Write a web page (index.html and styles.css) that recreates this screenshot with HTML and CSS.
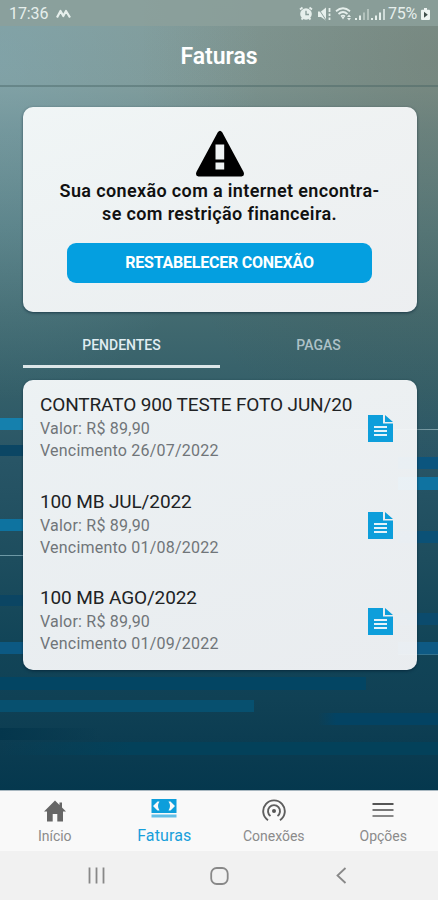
FILE: index.html
```html
<!DOCTYPE html>
<html lang="pt-BR">
<head>
<meta charset="utf-8">
<title>Faturas</title>
<link rel="stylesheet" href="styles.css">
</head>
<body>
<div class="app">
  <div class="status">
    <span class="clock">17:36</span>
    <svg class="st-m" width="15" height="10" viewBox="0 0 15 10"><path d="M1 8.5 L4.5 2 L7.3 7 L10 2 L14 8.5" fill="none" stroke="#e6efec" stroke-width="2.2" stroke-linejoin="round"/></svg>
    <svg class="st-icons" width="87" height="16" viewBox="0 0 87 16" fill="#e6efec">
      <path d="M1 3.5 L3.5 1.5 M13 3.5 L10.5 1.5 M2.5 13.5 L4 12 M11.5 13.5 L10 12" stroke="#e6efec" stroke-width="1.8"/>
      <circle cx="7" cy="8" r="5.8"/><path d="M7 4.7 V8.5 H10" fill="none" stroke="#8a9f9b" stroke-width="1.4"/>
      <path d="M19 5.5 H22 L27 1.5 V14.5 L22 11 H19Z"/><path d="M19 2 L27 14" stroke="#8a9f9b" stroke-width="1"/><path d="M30.5 2 V6 M30.5 7.5 V10 M30.5 11.5 V14" stroke="#e6efec" stroke-width="1.8"/>
      <g fill="none" stroke="#e6efec" stroke-width="1.8"><path d="M37 5.3 Q44 -.7 51 5.3"/><path d="M39.500 8 Q44 4 48.500 8"/><path d="M42 10.5 Q44 8.8 46 10.5"/></g>
      <path d="M42.500 11 L44 13.5 L45.500 11Z M48 11 L50 8.5 L52 11Z M48 12 L50 14.5 L52 12Z"/>
      <path d="M56 12h2v2h-2z M60 9.5h2v4.500h-2z"/><path opacity=".45" d="M64 6.5h2v7.500h-2z M68 3h2v11h-2z"/>
      <path d="M72 12h2v2h-2z M76 9.500h2v4.500h-2z M80 6.500h2v7.500h-2z"/><path opacity=".75" d="M84 3h2v11h-2z"/>
    </svg>
    <span class="percent">75%</span>
    <svg class="st-bat" width="9" height="14" viewBox="0 0 9 14"><path d="M3 1h3v1.800h2q1 0 1 1V12q0 1-1 1H1q-1 0-1-1V3.800q0-1 1-1h2Z" fill="#edf4f2"/><path d="M3 4.700 L6.800 7.700 L3 10.700Z" fill="#41504d"/></svg>
  </div>
  <header class="header"><h1>Faturas</h1></header>
  <main class="content">
    <section class="card alert">
      <svg width="50" height="47" viewBox="0 0 50 47"><path fill-rule="evenodd" d="M22.800 2.200 Q25 -.8 27.200 2.200 L48.600 42 Q50 46.300 46.500 46.500 H3.500 Q0 46.300 1.400 42Z M20.500 14.500V29.500H29.200V14.500Z M20.500 32.500V39.500H29.200V32.500Z"/></svg>
      <p>Sua conexão com a internet encontra-<br>se com restrição financeira.</p>
      <button class="btn">RESTABELECER CONEXÃO</button>
    </section>
    <nav class="tabs">
      <div class="tab active"><span>PENDENTES</span></div>
      <div class="tab"><span>PAGAS</span></div>
    </nav>
    <section class="card list">
      <article class="item">
        <div><h2>CONTRATO 900 TESTE FOTO JUN/20</h2><p>Valor: R$ 89,90</p><p>Vencimento 26/07/2022</p></div>
        <svg class="doc" width="25" height="27" viewBox="0 0 25 27"><path fill="#0d9edb" d="M0 0H15V8.500H25V27H0Z M17 0L25 7H17Z"/><path d="M6 12H19M6 16H19M6 20H19" stroke="#e5f3fa" stroke-width="2"/></svg>
      </article>
      <article class="item">
        <div><h2>100 MB JUL/2022</h2><p>Valor: R$ 89,90</p><p>Vencimento 01/08/2022</p></div>
        <svg class="doc" width="25" height="27" viewBox="0 0 25 27"><path fill="#0d9edb" d="M0 0H15V8.500H25V27H0Z M17 0L25 7H17Z"/><path d="M6 12H19M6 16H19M6 20H19" stroke="#e5f3fa" stroke-width="2"/></svg>
      </article>
      <article class="item">
        <div><h2>100 MB AGO/2022</h2><p>Valor: R$ 89,90</p><p>Vencimento 01/09/2022</p></div>
        <svg class="doc" width="25" height="27" viewBox="0 0 25 27"><path fill="#0d9edb" d="M0 0H15V8.500H25V27H0Z M17 0L25 7H17Z"/><path d="M6 12H19M6 16H19M6 20H19" stroke="#e5f3fa" stroke-width="2"/></svg>
      </article>
    </section>
  </main>
  <nav class="bottom">
    <div class="nav-item"><svg width="24" height="24" viewBox="0 0 24 24"><path fill="#666" d="M12 1.500L1 12.500H4V22.500H9.700V15H14.300V22.500H20V12.500H23L19 8.500V3.500H16.500V6Z"/></svg><span>Início</span></div>
    <div class="nav-item on"><svg width="26" height="24" viewBox="0 0 26 24"><path fill="#0d9edb" fill-rule="evenodd" d="M.5 0H25.500V14H.5Z M2 7L6.500 2.500H8.500Q5.500 7 8.500 11.500H6.500Z M24 7L19.500 2.500H17.500Q20.500 7 17.500 11.500H19.500Z"/><path fill="#63bfe7" d="M.5 15.500H25.500V18.500H.5Z"/></svg><span>Faturas</span></div>
    <div class="nav-item"><svg width="24" height="24" viewBox="0 0 24 24" fill="none" stroke="#5e5e5e" stroke-width="1.900"><circle cx="12" cy="12" r="2" fill="#555" stroke="none"/><path d="M8.500 17A6 6 0 1 1 15.500 17"/><path d="M6 21.200A10.800 10.800 0 1 1 18 21.200"/></svg><span>Conexões</span></div>
    <div class="nav-item"><svg width="24" height="24" viewBox="0 0 24 24" fill="none" stroke-width="2"><path stroke="#555" d="M1.500 5H22.500"/><path stroke="#777" d="M1.500 11H22.500"/><path stroke="#888" d="M1.500 17H22.500"/></svg><span>Opções</span></div>
  </nav>
  <div class="system">
    <svg width="18" height="17" viewBox="0 0 18 17"><path d="M1.500 .5V16.500M8.500 .5V16.500M15.500 .5V16.500" stroke="#888" stroke-width="1.800"/></svg>
    <svg width="19" height="18" viewBox="0 0 19 18"><rect x="1.200" y="1" width="16.500" height="16" rx="5.500" fill="none" stroke="#888" stroke-width="1.800"/></svg>
    <svg width="11" height="17" viewBox="0 0 11 17"><path d="M9.500 1L1.500 8.500L9.500 16" fill="none" stroke="#888" stroke-width="1.800"/></svg>
  </div>
</div>
</body>
</html>
```

FILE: styles.css
```css
* { box-sizing: border-box; }
body, h1, h2, p { margin: 0; }
body { font-family: Roboto, sans-serif; background: #f1f1f1; }
svg { display: block; flex: none; }

.app {
  width: 438px;
  height: 900px;
  display: flex;
  flex-direction: column;
  overflow: hidden;
  background-color: #083a50;
  background-repeat: no-repeat;
  background-image:
    linear-gradient(#1580ad, #1580ad), linear-gradient(#0b4664, #0b4664),
    linear-gradient(#0e73a0, #0e73a0), linear-gradient(#6d98a5, #6d98a5),
    linear-gradient(#0b4563, #0b4563), linear-gradient(#0c5983, #0c5983),
    linear-gradient(90deg, rgba(127,160,168,0), #7fa0a8), linear-gradient(#0b557e, #0b557e),
    linear-gradient(#0f73a1, #0f73a1), linear-gradient(#0b5176, #0b5176),
    linear-gradient(#0b4b6d, #0b4b6d), linear-gradient(#0e5a84, #0e5a84),
    linear-gradient(#32718d, #32718d),
    linear-gradient(#034563, #034563), linear-gradient(#07506f, #07506f),
    linear-gradient(90deg, rgba(3,67,99,0), #034363 15%),
    linear-gradient(90deg, #04364c, rgba(4,54,76,0)),
    linear-gradient(90deg, rgba(3,65,90,0), #03415a 30%),
    radial-gradient(ellipse 260px 340px at 0 60px, rgba(130,180,200,.34), rgba(130,180,200,0)),
    radial-gradient(ellipse 300px 420px at 438px 60px, rgba(85,75,50,.22), rgba(85,75,50,0)),
    linear-gradient(#839b98 0, #7f9895 85px, #6f8d8d 130px, #557b7f 230px, #426a70 315px, #345f69 390px, #285566 460px, #1d4d5e 560px, #124558 640px, #104155 700px, #0b3c51 745px, #05384e 790px);
  background-size:
    24px 12px, 24px 11px, 24px 12px, 24px 1px, 24px 11px, 24px 12px,
    110px 1px, 40px 12px, 40px 13px, 40px 12px, 40px 12px, 40px 12px, 40px 1px,
    366px 13px, 254px 12px, 120px 12px, 100px 12px, 438px 13px,
    438px 790px, 438px 790px, 438px 790px;
  background-position:
    0 418px, 0 445px, 0 519px, 0 555px, 0 595px, 0 642px,
    328px 429px, 398px 457px, 398px 477px, 398px 531px, 398px 613px, 398px 642px, 398px 654px,
    0 677px, 0 700px, 318px 713px, 0 728px, 0 742px,
    0 0, 0 0, 0 0;
}

.status {
  height: 26px;
  padding: 2px 8px 0 9px;
  display: flex;
  align-items: center;
  background: rgba(140,160,155,.85);
  color: #e6efec;
  font-size: 16px;
  line-height: 24px;
}
.clock { width: 40px; letter-spacing: -.1px; }
.st-m { margin-left: 7px; }
.st-icons { margin-left: auto; }
.percent { margin-left: 2px; width: 32px; letter-spacing: -.3px; }
.st-bat { margin-left: 1px; }

.header {
  height: 61px;
  border-bottom: 2px solid rgba(65,95,94,.4);
  display: flex;
  justify-content: center;
}
.header h1 { color: #fff; font-size: 23px; line-height: 61px; font-weight: 600; }

.content { height: 702px; flex: none; padding: 20px 21px 0 23px; }
.card {
  border-radius: 10px;
  background: linear-gradient(150deg, rgba(250,253,253,.92), rgba(247,247,249,.94));
  box-shadow: 0 1px 3px rgba(0,25,45,.6);
}
.alert {
  height: 205px;
  padding: 23px 1px 0 0;
  display: flex;
  flex-direction: column;
  align-items: center;
}
.alert p { margin-top: 3px; text-align: center; font-size: 18px; line-height: 22.500px; font-weight: 600; color: #111; letter-spacing: .36px; white-space: nowrap; }
.btn {
  width: 305px;
  height: 40px;
  margin: 18px 0 0;
  padding: 0;
  border: 0;
  border-radius: 9px;
  background: #049fe0;
  color: #fff;
  font: 700 16px/38px Roboto, sans-serif;
  letter-spacing: -.23px;
}

.tabs { display: flex; height: 56px; }
.tab { flex: 1; text-align: center; color: #aec1c7; font-size: 14px; line-height: 18px; font-weight: 500; padding-top: 24px; }
.tab.active { color: #e0edf2; border-bottom: 3px solid #dce6e8; }

.list { margin-top: 12px; height: 290px; padding: 12px 24px 0 17px; background: linear-gradient(150deg, rgba(252,254,255,.92), rgba(247,247,249,.94)); }
.item { height: 96.700px; display: flex; justify-content: space-between; }
.item h2 { height: 26px; font-size: 19px; line-height: 26px; font-weight: 400; color: #202224; letter-spacing: -.13px; white-space: nowrap; }
.item p { font-size: 16px; line-height: 22px; color: #707579; letter-spacing: .22px; white-space: nowrap; }
.item .doc { margin-top: 23px; }

.bottom { height: 61px; flex: none; background: #f9f9f9; border-top: 1px solid #a9b8c1; display: grid; grid-template-columns: repeat(4, 1fr); margin-top: 1px; }
.nav-item { display: flex; flex-direction: column; align-items: center; color: #8b8b8b; font-size: 14px; padding-top: 8px; }
.nav-item span { line-height: 18px; margin-top: 4px; }
.nav-item.on { color: #189fdb; font-size: 16px; }
.nav-item.on span { letter-spacing: .1px; }

.system { flex: 1; background: #f1f1f1; display: flex; justify-content: space-between; align-items: center; padding: 0 91px 0 88px; }
.system svg:nth-child(2) { margin-right: 3px; }
```
